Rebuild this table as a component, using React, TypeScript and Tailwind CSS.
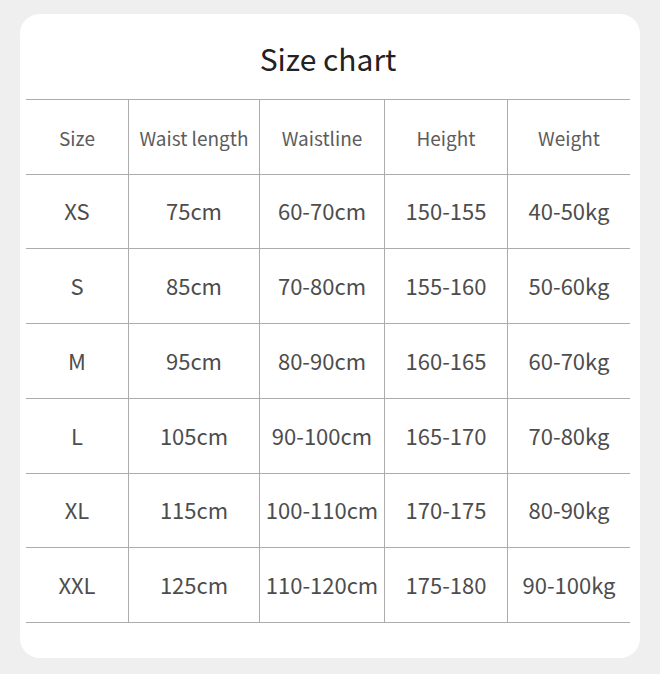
const headers = ["Size", "Waist length", "Waistline", "Height", "Weight"];

const rows = [
  ["XS", "75cm", "60-70cm", "150-155", "40-50kg"],
  ["S", "85cm", "70-80cm", "155-160", "50-60kg"],
  ["M", "95cm", "80-90cm", "160-165", "60-70kg"],
  ["L", "105cm", "90-100cm", "165-170", "70-80kg"],
  ["XL", "115cm", "100-110cm", "170-175", "80-90kg"],
  ["XXL", "125cm", "110-120cm", "175-180", "90-100kg"],
];

const heights = ["h-[74px]", "h-[75px]", "h-[75px]", "h-[75px]", "h-[74px]", "h-[75px]"];

const cols = "grid grid-cols-[102px_131px_125px_123px_123px]";

export default function App() {
  return (
    <div
      className="min-h-[674px] bg-[#efefef] pt-[14px] pl-[20px]"
      style={{ fontFamily: '"Noto Sans CJK SC", "Noto Sans", sans-serif' }}
    >
      <div className="h-[644px] w-[620px] rounded-[20px] bg-white pl-[6px] pr-[10px]">
        <h1 className="flex h-[85px] items-center justify-center pt-[4px] text-[30px] text-[#222]">
          Size chart
        </h1>
        <div className="border-t border-[#acacac]">
          <div className={`${cols} h-[75px] border-b border-[#acacac]`}>
            {headers.map((h, i) => (
              <div
                key={h}
                className={`flex items-center justify-center pt-[3px] text-[19px] text-[#5c5c5c] ${i > 0 ? "border-l border-[#acacac]" : ""}`}
              >
                {h}
              </div>
            ))}
          </div>
          {rows.map((r, ri) => (
            <div key={r[0]} className={`${cols} ${heights[ri]} border-b border-[#acacac]`}>
              {r.map((c, i) => (
                <div
                  key={i}
                  className={`flex items-center justify-center whitespace-nowrap pb-[2px] text-[22px] text-[#4d4d4d] ${i > 0 ? "border-l border-[#acacac]" : ""}`}
                >
                  {c}
                </div>
              ))}
            </div>
          ))}
        </div>
      </div>
    </div>
  );
}
